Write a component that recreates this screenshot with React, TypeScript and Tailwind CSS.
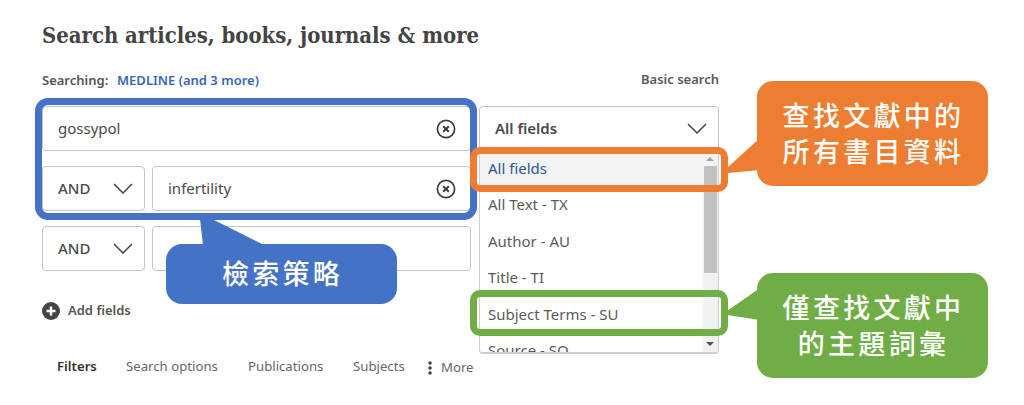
const sans = "font-['Noto_Sans','Open_Sans',sans-serif]";
const cjk = "font-['Noto_Sans_CJK_TC',sans-serif]";

const options = ['All fields', 'All Text - TX', 'Author - AU', 'Title - TI', 'Subject Terms - SU', 'Source - SO'];
const tabs = [
  { label: 'Filters', cls: 'w-[69px] font-semibold text-[#333]' },
  { label: 'Search options', cls: 'w-[122px]' },
  { label: 'Publications', cls: 'w-[105px]' },
  { label: 'Subjects', cls: 'w-[75px]' },
];

function Chevron({ className }: { className: string }) {
  return (
    <svg className={className} viewBox="0 0 20 11" fill="none" stroke="#444" strokeWidth="1.5">
      <path d="M1 1l9 9 9-9" />
    </svg>
  );
}

function ClearIcon() {
  return (
    <svg className="h-[20px] w-[20px] shrink-0" viewBox="0 0 20 20" fill="none" stroke="#3d3d3d">
      <circle cx="10" cy="10" r="8.6" strokeWidth="1.7" />
      <path d="M7.2 7.2l5.6 5.6M12.8 7.2l-5.6 5.6" strokeWidth="2" />
    </svg>
  );
}

function TextBox({ value, clear }: { value?: string; clear?: boolean }) {
  return (
    <div className="flex h-[45px] min-w-0 flex-1 items-center justify-between rounded-[4px] border border-[#c4c4c4] bg-white pl-[15px] pr-[14px] text-[15px] text-[#4a4a4a]">
      <span>{value}</span>
      {clear && <ClearIcon />}
    </div>
  );
}

function AndSelect() {
  return (
    <div className="flex h-[45px] w-[103px] shrink-0 items-center justify-between rounded-[4px] border border-[#c4c4c4] bg-white pl-[15px] pr-[11px] text-[15px] font-medium text-[#4a4a4a]">
      <span>AND</span>
      <Chevron className="h-[11px] w-[20px]" />
    </div>
  );
}

function FieldDropdown() {
  return (
    <div className="absolute left-0 top-[45px] h-[203px] w-[240px] overflow-hidden rounded-b-[4px] border-x border-b-2 border-[#cfcfcf] bg-white text-[15px] text-[#5a5a5a]">
      <div className="-mt-[1px]">
        {options.map((o, i) => (
          <div
            key={o}
            className={
              'flex h-[36.4px] items-center pl-[8px] ' +
              (i === 0 ? 'bg-[#f3f3f3] text-[#2f5597]' : '')
            }
          >
            {o}
          </div>
        ))}
      </div>
      {/* scrollbar */}
      <div className="absolute bottom-0 right-0 top-0 w-[15px] bg-[#f1f1f1]">
        <div className="absolute left-[3px] top-[6px] h-0 w-0 border-x-[4px] border-b-[4px] border-x-transparent border-b-[#a3a3a3]" />
        <div className="absolute left-px right-px top-[15px] h-[107px] bg-[#c1c1c1]" />
        <div className="absolute bottom-[6px] left-[3px] h-0 w-0 border-x-[4px] border-t-[4px] border-x-transparent border-t-[#505050]" />
      </div>
    </div>
  );
}

function Callout({ className, lines }: { className: string; lines: string[] }) {
  return (
    <div className={'absolute flex flex-col items-center justify-center rounded-[16px] pb-[2px] pl-[2px] text-[27px] font-medium leading-[36px] tracking-[3.3px] text-white ' + cjk + ' ' + className}>
      {lines.map((l) => (
        <span key={l}>{l}</span>
      ))}
    </div>
  );
}

export default function App() {
  return (
    <div className={'relative h-[405px] w-[1024px] overflow-hidden bg-white ' + sans}>
      <div className="ml-[42px] w-[677px]">
        <h1 className="pt-[19px] font-['DejaVu_Serif',serif] text-[21.9px] font-bold leading-[32px] text-[#444] [font-stretch:condensed]">
          Search articles, books, journals &amp; more
        </h1>

        <div className="mt-[20px] flex h-[20px] items-center justify-between text-[13px] font-semibold text-[#555]">
          <div>
            Searching:&nbsp; <span className="ml-[2px] text-[#3a66b5]">MEDLINE (and 3 more)</span>
          </div>
          <div className="mb-[3px] text-[#5a5a5a]">Basic search</div>
        </div>

        <div className="mt-[15px] flex gap-[8px]">
          <div className="flex w-[429px] flex-col gap-[15px]">
            <div className="flex">
              <TextBox value="gossypol" clear />
            </div>
            <div className="flex gap-[7px]">
              <AndSelect />
              <TextBox value="infertility" clear />
            </div>
            <div className="flex gap-[7px]">
              <AndSelect />
              <TextBox />
            </div>
          </div>

          <div className="relative h-[45px] w-[240px]">
            <div className="flex h-[45px] items-center justify-between rounded-t-[4px] border border-[#c4c4c4] bg-white pl-[15px] pr-[11px] text-[15px] font-semibold text-[#4a4a4a]">
              <span>All fields</span>
              <Chevron className="h-[11px] w-[20px]" />
            </div>
            <FieldDropdown />
          </div>
        </div>

        <div className="mt-[29px] flex h-[22px] items-center gap-[8px] text-[13px] font-semibold text-[#555]">
          <svg className="h-[18px] w-[18px]" viewBox="0 0 18 18">
            <circle cx="9" cy="9" r="9" fill="#444" />
            <path d="M9 4.5v9M4.5 9h9" stroke="#fff" strokeWidth="2.4" />
          </svg>
          Add fields
        </div>

        <div className="mt-[34px] flex h-[22px] items-center pl-[15px] text-[13.2px] text-[#666]">
          {tabs.map((t) => (
            <div key={t.label} className={t.cls}>
              {t.label}
            </div>
          ))}
          <div className="flex items-center gap-[9px] pt-[2px]">
            <svg className="h-[14px] w-[4px]" viewBox="0 0 4 14" fill="#444">
              <circle cx="2" cy="2" r="1.8" />
              <circle cx="2" cy="7" r="1.8" />
              <circle cx="2" cy="12" r="1.8" />
            </svg>
            More
          </div>
        </div>
      </div>

      {/* annotation frames */}
      <div className="absolute left-[35px] top-[98px] h-[122px] w-[442px] rounded-[13px] border-[7px] border-[#4472c4]" />
      <div className="absolute left-[470px] top-[147px] h-[45px] w-[258px] rounded-[10px] border-[7px] border-[#ed7d31]" />
      <div className="absolute left-[470px] top-[290px] h-[46px] w-[258px] rounded-[10px] border-[7px] border-[#70ad47]" />

      {/* callout tails */}
      <svg className="absolute left-0 top-0 h-[405px] w-[1024px]" viewBox="0 0 1024 405">
        <polygon points="200,219 212,219 264,245 203,245" fill="#4472c4" />
        <polygon points="727,168 760,138 760,170 728,173" fill="#ed7d31" />
        <polygon points="727,311 760,288 760,320 727,315" fill="#70ad47" />
      </svg>

      <Callout className="left-[166px] top-[244px] h-[60px] w-[231px] rounded-[12px] bg-[#4472c4]" lines={['檢索策略']} />
      <Callout className="left-[757px] top-[81px] h-[105px] w-[231px] bg-[#ed7d31]" lines={['查找文獻中的', '所有書目資料']} />
      <Callout className="left-[757px] top-[273px] h-[105px] w-[231px] bg-[#70ad47]" lines={['僅查找文獻中', '的主題詞彙']} />
    </div>
  );
}
